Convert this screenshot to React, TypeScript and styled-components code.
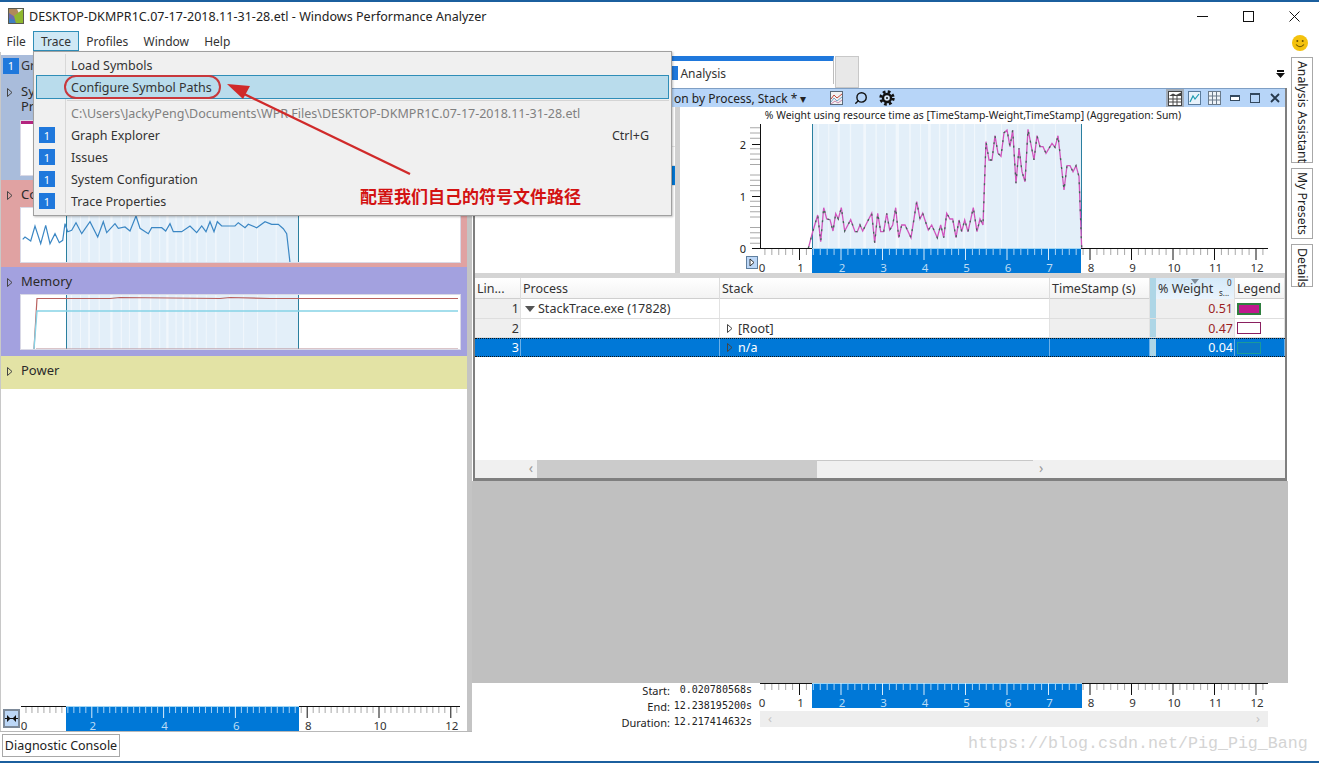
import React from 'react';
import styled, { createGlobalStyle } from 'styled-components';
import { Search } from 'lucide-react';

const UI_FONT = '"Noto Sans", "Open Sans", sans-serif';

const Global = createGlobalStyle`
  html, body { margin: 0; padding: 0; background: #fff; overflow: hidden; }
  * { box-sizing: border-box; }
`;

const Page = styled.div`
  position: relative;
  width: 1319px;
  height: 763px;
  display: flex;
  flex-direction: column;
  border-top: 2px solid #1b5f9e;
  border-bottom: 2px solid #1b5f9e;
  background: #fff;
  font-family: ${UI_FONT};
  font-size: 12.5px;
  color: #333;
  overflow: hidden;
`;

const BlockSvg = styled.svg`
  display: block;
  flex: none;
  overflow: visible;
`;

const TitleBar = styled.div`
  height: 28px;
  flex: none;
  display: flex;
  align-items: center;
  padding: 0 2px 0 8px;
  color: #222;
`;

const TitleText = styled.span`
  margin-left: 5px;
  flex: 1;
  letter-spacing: 0.03px;
`;

const WinButton = styled.div`
  width: 46px;
  height: 28px;
  display: flex;
  align-items: center;
  justify-content: center;
`;

const MenuBar = styled.div`
  height: 22px;
  flex: none;
  display: flex;
  align-items: center;
  padding-right: 11px;
`;

const MenuButton = styled.div<{ $open?: boolean }>`
  height: 20px;
  line-height: 20px;
  padding: 0 6.6px;
  border: 1px solid ${p => (p.$open ? '#2f8eb8' : 'transparent')};
  background: ${p => (p.$open ? '#cfe8f5' : 'transparent')};
  font-size: 12px;
  &:first-child { margin-left: -1px; }
`;

const Spacer = styled.div`
  flex: 1;
`;

const SmileSlot = styled.div`
  height: 16px;
  margin-top: 3px;
`;

const Body = styled.div`
  flex: 1;
  display: flex;
  min-height: 0;
`;

const LeftColumn = styled.div`
  width: 472px;
  flex: none;
  display: flex;
  flex-direction: column;
`;

const LeftPanes = styled.div`
  height: 680px;
  flex: none;
  display: flex;
  border-bottom: 1px solid #b8b8b8;
`;

const SectionList = styled.div`
  width: 467px;
  flex: none;
  display: flex;
  flex-direction: column;
  padding-top: 3px;
  border-left: 1px solid #c8c8c8;
`;

const Splitter = styled.div`
  width: 5px;
  flex: none;
  margin-top: 3px;
  background: #c4c4c4;
`;

const GroupHeader = styled.div`
  height: 23px;
  flex: none;
  display: flex;
  align-items: center;
  gap: 2px;
  padding: 0 0 2px 2px;
  background: #a9bcdb;
  font-size: 12.5px;
`;

const Tag = styled.span`
  width: 16px;
  height: 16px;
  flex: none;
  display: flex;
  align-items: center;
  justify-content: center;
  background: #1f78dc;
  color: #fff;
  font-size: 11px;
`;

const Section = styled.section<{ $bg: string; $h: number }>`
  height: ${p => p.$h}px;
  flex: none;
  background: ${p => p.$bg};
  display: flex;
  flex-direction: column;
  padding-right: 6px;
`;

const SectionHead = styled.div`
  display: flex;
  align-items: flex-start;
  gap: 8px;
  padding: 6px 0 0 6px;
  font-size: 13px;
  line-height: 16px;
  color: #2a2a2a;
  height: 27px;
  flex: none;
`;

const SectionHeadTall = styled(SectionHead)`
  height: 42px;
  line-height: 15px;
`;

const CaretSlot = styled.div`
  margin-top: 1px;
`;

const GraphBox = styled.div`
  margin-left: 19px;
  height: 56px;
  width: 441px;
  flex: none;
  background: #fff;
  border: 1px solid #d9d9e6;
  overflow: hidden;
`;

const ActivityStrip = styled.div`
  height: 3px;
  background: #b4247e;
`;

const LeftFill = styled.div`
  flex: 1;
  background: #fff;
`;

const LeftRulerRow = styled.div`
  height: 25px;
  flex: none;
  display: flex;
  align-items: flex-start;
`;

const ExpandButton = styled.div`
  width: 17px;
  height: 19px;
  margin: 3px 0 0 2px;
  flex: none;
  display: flex;
  align-items: center;
  justify-content: center;
  background: #bcd7f7;
  border: 2px solid #7d8a99;
`;

const FooterRow = styled.div`
  flex: 1;
  padding: 2px 0 0 2px;
  display: flex;
  align-items: flex-start;
`;

const ConsoleButton = styled.div`
  height: 23px;
  width: 118px;
  border: 1px solid #a8a8a8;
  line-height: 21px;
  text-align: center;
  color: #222;
  white-space: nowrap;
`;

const RightColumn = styled.div`
  width: 816px;
  flex: none;
  display: flex;
  flex-direction: column;
`;

const TabStrip = styled.div`
  height: 36px;
  flex: none;
  display: flex;
  align-items: flex-start;
  padding: 4px 0 0 0;
`;

const ActiveTab = styled.div`
  width: 362px;
  height: 28px;
  flex: none;
  border-top: 5px solid #1f78dc;
  border-right: 1px solid #bdbdbd;
  display: flex;
  align-items: center;
  justify-content: flex-end;
  padding: 1px 107px 0 0;
  gap: 2px;
  font-size: 12px;
`;

const TabMark = styled.span`
  width: 6px;
  height: 14px;
  background: #1f78dc;
`;

const IdleTab = styled.div`
  width: 24px;
  height: 32px;
  margin-left: 1px;
  flex: none;
  background: #e8e8e8;
  border: 1px solid #c8c8c8;
`;

const OverflowMark = styled.div`
  margin: 10px 0 0 auto;
  padding-right: 3px;
`;

const GraphWindow = styled.div`
  height: 393px;
  flex: none;
  margin: 0 1px;
  display: flex;
  flex-direction: column;
  border-left: 2px solid #7f7f7f;
  border-right: 2px solid #7f7f7f;
  border-bottom: 3px solid #7f7f7f;
  background: #fff;
`;

const GraphTitle = styled.div`
  height: 19px;
  flex: none;
  display: flex;
  align-items: center;
  background: #b7d5f8;
  border-top: 1px solid #7f9fc4;
  padding: 0 1px 0 199px;
  color: #222;
  font-size: 12px;
`;

const GraphName = styled.span`
  width: 155px;
  white-space: nowrap;
`;

const GraphIcon = styled.div<{ $w: number; $active?: boolean; $flip?: boolean }>`
  width: ${p => p.$w}px;
  height: 18px;
  flex: none;
  display: flex;
  align-items: center;
  justify-content: center;
  color: #111;
  background: ${p => (p.$active ? '#a3adb9' : 'transparent')};
  transform: ${p => (p.$flip ? 'scaleX(-1)' : 'none')};
`;

const ChartArea = styled.div`
  height: 166px;
  flex: none;
  display: flex;
`;

const SeriesList = styled.div`
  width: 200px;
  flex: none;
  display: flex;
  flex-direction: column;
  padding-top: 20px;
`;

const SeriesRow = styled.div<{ $selected?: boolean }>`
  height: 19.5px;
  flex: none;
  border-bottom: 1px solid #e6e6e6;
  background: ${p => (p.$selected ? '#0078d7' : '#fff')};
`;

const ChartSplit = styled.div`
  width: 5px;
  flex: none;
  background: #d0d0d0;
`;

const HSplit = styled.div`
  height: 5px;
  flex: none;
  background: #d4d4d4;
`;

const COLUMNS = '46px 199px 330px 100px 6px 79px 50px';

const HeaderRow = styled.div`
  height: 21px;
  flex: none;
  display: grid;
  grid-template-columns: ${COLUMNS};
  background: linear-gradient(#fff, #f3f3f3);
  border-bottom: 1px solid #cfcfcf;
  color: #333;
`;

const HeadCell = styled.div<{ $sorted?: boolean }>`
  position: relative;
  padding-left: 2px;
  line-height: 21px;
  white-space: nowrap;
  border-right: 1px solid #dcdcdc;
  background: ${p => (p.$sorted ? 'linear-gradient(#d4e9f9, #eaf4fc)' : 'transparent')};
`;

const SortArrow = styled.span`
  position: absolute;
  top: 1px;
  left: 35px;
  border-left: 4px solid transparent;
  border-right: 4px solid transparent;
  border-top: 5px solid #7d8c99;
`;

const TinyMark = styled.span<{ $top: number; $left: number }>`
  position: absolute;
  top: ${p => p.$top}px;
  left: ${p => p.$left}px;
  font-size: 8px;
  line-height: 9px;
`;

const BarCell = styled.div`
  background: #aed6e6;
`;

const Row = styled.div<{ $selected?: boolean; $h: number }>`
  height: ${p => p.$h}px;
  flex: none;
  display: grid;
  grid-template-columns: ${COLUMNS};
  color: ${p => (p.$selected ? '#fff' : '#333')};
  background: ${p => (p.$selected ? '#0078d7' : '#fff')};
  border-bottom: ${p => (p.$selected ? '1px dotted #111' : '1px solid #dedede')};
  border-top: ${p => (p.$selected ? '1px dotted #111' : 'none')};
`;

const Cell = styled.div<{ $shade?: boolean; $right?: boolean; $red?: boolean; $selected?: boolean; $indent?: number }>`
  display: flex;
  align-items: center;
  gap: 3px;
  justify-content: ${p => (p.$right ? 'flex-end' : 'flex-start')};
  padding-right: ${p => (p.$right ? '1px' : '0')};
  padding-left: ${p => p.$indent ?? 0}px;
  background: ${p => (p.$selected ? 'transparent' : p.$shade ? '#efefef' : 'transparent')};
  color: ${p => (p.$red ? '#9c1f1f' : 'inherit')};
  border-right: 1px solid ${p => (p.$selected ? '#6cb0e8' : '#e2e2e2')};
  white-space: nowrap;
`;

const StackName = styled.span`
  margin-left: 2px;
`;

const Swatch = styled.span<{ $fill: string; $edge: string; $thick?: boolean }>`
  width: 24px;
  height: 12px;
  margin-left: 2px;
  background: ${p => p.$fill};
  border: ${p => (p.$thick ? 2 : 1)}px solid ${p => p.$edge};
`;

const TableSpace = styled.div`
  flex: 1;
  background: #fff;
`;

const HScroll = styled.div`
  height: 18px;
  flex: none;
  display: flex;
  align-items: stretch;
  background: #f0f0f0;
  color: #9a9a9a;
`;

const ScrollGutter = styled.div`
  width: 62px;
  flex: none;
  text-align: right;
  padding-right: 4px;
  line-height: 16px;
  font-size: 14px;
`;

const ScrollThumb = styled.div`
  width: 280px;
  flex: none;
  background: #cbcbcb;
`;

const ScrollTrack = styled.div`
  width: 216px;
  flex: none;
  border-top: 1px solid #c8c8c8;
`;

const ScrollEnd = styled.div`
  padding-left: 6px;
  line-height: 16px;
  font-size: 14px;
`;

const GrayArea = styled.div`
  flex: 1;
  background: #c0c0c0;
`;

const TimeFooter = styled.div`
  height: 78px;
  flex: none;
  display: flex;
`;

const TimeTable = styled.div`
  width: 288px;
  flex: none;
  display: grid;
  grid-template-columns: 198px 90px;
  grid-auto-rows: 16px;
`;

const TimeLabel = styled.div`
  text-align: right;
  font-size: 11px;
  line-height: 16px;
  color: #222;
`;

const TimeValue = styled.div`
  padding-right: 8px;
  text-align: right;
  font-family: "DejaVu Sans Mono", "Liberation Mono", monospace;
  font-size: 10px;
  line-height: 14px;
  color: #222;
`;

const TimeRuler = styled.div`
  display: flex;
  flex-direction: column;
  gap: 3px;
`;

const TimeScroll = styled.div`
  width: 508px;
  height: 16px;
  background: #eeeeee;
  display: flex;
  justify-content: space-between;
  padding: 0 8px;
  font-size: 13px;
  line-height: 15px;
  color: #c4c4c4;
`;

const Rail = styled.div`
  width: 31px;
  flex: none;
  display: flex;
  flex-direction: column;
  gap: 5px;
  padding: 5px 0 0 3px;
`;

const RailTab = styled.div<{ $h: number }>`
  width: 22px;
  height: ${p => p.$h}px;
  border: 1px solid #a8a8a8;
  writing-mode: vertical-rl;
  display: flex;
  align-items: center;
  padding-top: 3px;
  color: #222;
  font-size: 12.3px;
  white-space: nowrap;
`;

const TraceMenu = styled.div`
  position: absolute;
  left: 33px;
  top: 49px;
  width: 639px;
  height: 165px;
  padding-top: 2px;
  background: #f0f0f0;
  border: 1px solid #a0a0a0;
  box-shadow: 1px 1px 2px rgba(0, 0, 0, 0.25);
  z-index: 5;
  &::before {
    content: '';
    position: absolute;
    left: 31px;
    top: 2px;
    bottom: 2px;
    width: 1px;
    background: #d8d8d8;
  }
`;

const MenuItem = styled.div<{ $hot?: boolean; $dim?: boolean }>`
  position: relative;
  height: 22px;
  display: flex;
  align-items: center;
  margin: 0 3px;
  padding: 0 19px 0 2px;
  background: ${p => (p.$hot ? '#b9dcec' : 'transparent')};
  outline: ${p => (p.$hot ? '1px solid #2f8eb8' : 'none')};
  color: ${p => (p.$dim ? '#808080' : '#333')};
`;

const MenuGutter = styled.div`
  width: 32px;
  flex: none;
`;

const MenuLabel = styled.span`
  flex: 1;
`;

const MenuSeparator = styled.div`
  height: 1px;
  margin: 2px 2px 1px 33px;
  background: #d4d4d4;
`;

const Overlay = styled.svg`
  position: absolute;
  left: 0;
  top: -2px;
  z-index: 6;
  pointer-events: none;
`;

const Note = styled.div`
  position: absolute;
  left: 360px;
  top: 183px;
  z-index: 7;
  font-family: "Noto Sans CJK SC", sans-serif;
  font-weight: 700;
  font-size: 17px;
  line-height: 22px;
  color: #d31212;
  white-space: nowrap;
`;

const Watermark = styled.div`
  position: absolute;
  left: 968px;
  top: 732px;
  z-index: 4;
  font-family: "Liberation Mono", monospace;
  font-size: 16.67px;
  line-height: 20px;
  color: #d4d4d4;
  white-space: nowrap;
`;

const STRIPES: [number, number][] = [
  [0.02, 0.006], [0.06, 0.004], [0.095, 0.008], [0.14, 0.005], [0.19, 0.01], [0.235, 0.005],
  [0.27, 0.004], [0.31, 0.012], [0.36, 0.006], [0.4, 0.004], [0.43, 0.01], [0.47, 0.005],
  [0.5, 0.007], [0.53, 0.004], [0.56, 0.006], [0.6, 0.004], [0.64, 0.006], [0.7, 0.003],
  [0.76, 0.004], [0.82, 0.004], [0.9, 0.003],
];

function Caretside() {
  return (
    <svg width="6" height="9" viewBox="0 0 6 9">
      <path d="M0.5 0.5 L5 4.5 L0.5 8.5 Z" fill="none" stroke="#444" strokeWidth="1" />
    </svg>
  );
}

function CaretDown() {
  return (
    <svg width="10" height="6" viewBox="0 0 10 6">
      <path d="M0 0 H10 L5 6 Z" fill="#555" />
    </svg>
  );
}

interface RulerProps {
  width: number;
  height: number;
  origin: number;
  unit: number;
  every: number;
  minor: number;
  max: number;
  selStart: number;
  selEnd: number;
  startAt: number;
}

function Ruler(props: RulerProps) {
  const { width, height, origin, unit, every, minor, max, selStart, selEnd, startAt } = props;
  const inSel = (x: number) => x >= selStart && x <= selEnd;
  const minors: React.ReactNode[] = [];
  const step = (unit * every) / minor;
  for (let i = 1; i * step + origin < width; i++) {
    const x = origin + i * step;
    if (i % minor === 0) continue;
    minors.push(
      <line key={i} x1={x} x2={x} y1={1} y2={7} stroke={inSel(x) ? '#a9d2f3' : '#a8a8a8'} />,
    );
  }
  const labels: React.ReactNode[] = [];
  for (let t = 0; t <= max; t += every) {
    const x = origin + t * unit;
    labels.push(
      <g key={t}>
        {t > 0 && <line x1={x} x2={x} y1={0} y2={12} stroke={inSel(x) ? '#d8ecfb' : '#111'} />}
        <text
          x={t === 0 ? x + 4 : x + 1}
          y={height - 1}
          textAnchor="middle"
          fontSize="11.5"
          fontFamily={UI_FONT}
          fill={inSel(x) ? '#bcdcf5' : '#333'}
        >
          {t}
        </text>
      </g>,
    );
  }
  return (
    <BlockSvg width={width} height={height} viewBox={`0 0 ${width} ${height}`}>
      <line x1={startAt} x2={width} y1={0.5} y2={0.5} stroke="#111" />
      <rect x={selStart} y={0} width={selEnd - selStart} height={height} fill="#0078d7" />
      <line x1={selStart} x2={selEnd} y1={0.5} y2={0.5} stroke="#9fd6f5" />
      {minors}
      {labels}
    </BlockSvg>
  );
}

const toPath = (pts: number[][], sx: number, ox: number, sy: number, oy: number) =>
  pts.map(([x, y]) => `${(x * sx + ox).toFixed(1)},${(y * sy + oy).toFixed(1)}`).join(' ');

const WEIGHT_POINTS = [
  [205,490],[217,445],[233,390],[242,470],[251,368],[260,402],[270,404],[279,438],[287,386],[295,402],[304,368],
  [314,438],[332,404],[345,440],[352,440],[360,420],[368,438],[395,385],[404,474],[413,385],[422,440],[431,440],
  [440,385],[449,435],[458,420],[467,368],[476,458],[485,420],[495,420],[513,458],[530,350],[540,402],[548,385],
  [565,435],[575,420],[592,458],[602,420],[611,458],[620,385],[630,402],[638,402],[648,458],[657,405],[665,440],
  [674,405],[684,440],[700,368],[711,440],[720,402],[729,420],[738,170],[747,225],[756,225],[765,152],[774,205],
  [783,214],[792,143],[801,135],[810,185],[818,135],[828,295],[837,190],[846,260],[855,290],[864,133],[882,225],
  [891,152],[900,185],[909,185],[918,205],[936,175],[945,187],[954,152],[972,315],[981,242],[990,242],[999,260],
  [1008,242],[1017,275],[1025,490],
];

const CPU_POINTS = [
  [68,175],[75,168],[92,180],[105,135],[122,188],[137,133],[150,188],[165,158],[178,185],[188,178],[195,128],
  [203,152],[215,148],[228,125],[245,158],[270,122],[293,168],[310,122],[320,155],[345,128],[355,142],[375,138],
  [390,150],[408,105],[420,142],[445,158],[455,140],[485,140],[497,150],[510,128],[520,152],[545,152],[570,135],
  [590,155],[605,135],[618,152],[630,122],[642,152],[652,122],[665,135],[705,135],[715,125],[735,140],[745,130],
  [770,140],[795,122],[815,130],[835,130],[850,143],[860,158],[870,245],
];

function SelectionBand({ x, w, y, h }: { x: number; w: number; y: number; h: number }) {
  return (
    <g>
      <rect x={x} y={y} width={w} height={h} fill="#e3eff9" />
      {STRIPES.map(([a, b]) => (
        <rect key={a} x={x + a * w} y={y} width={Math.max(1, b * w)} height={h} fill="#f1f7fc" />
      ))}
      <line x1={x + 0.5} x2={x + 0.5} y1={y} y2={y + h} stroke="#2a7f9f" />
      <line x1={x + w - 0.5} x2={x + w - 0.5} y1={y} y2={y + h} stroke="#2a7f9f" />
    </g>
  );
}

function CpuGraph() {
  return (
    <BlockSvg width="439" height="54" viewBox="21 207 439 54">
      <SelectionBand x={66} w={233} y={207} h={54} />
      <polyline points={toPath(CPU_POINTS, 1 / 3, 0, 1 / 3, 180)} fill="none" stroke="#3b87c4" strokeWidth="1.2" />
    </BlockSvg>
  );
}

function MemoryGraph() {
  return (
    <BlockSvg width="439" height="54" viewBox="21 295 439 54">
      <SelectionBand x={66} w={233} y={295} h={54} />
      <polyline points="34,349 37,298.5 110,298.5 120,297.5 220,298.5 230,297.5 270,298.5 458,298.5" fill="none" stroke="#b9615f" strokeWidth="1.2" />
      <polyline points="34,349 37,311 458,311" fill="none" stroke="#86d3e6" strokeWidth="1.4" />
      <line x1="36" x2="458" y1="349" y2="349" stroke="#b58a92" strokeWidth="1" />
    </BlockSvg>
  );
}

function WeightChart() {
  const yTicks: React.ReactNode[] = [];
  for (let i = 0; i <= 23; i++) {
    if (i % 5 === 0) continue;
    const y = 248.5 - i * 5.25;
    yTicks.push(<line key={i} x1={750} x2={760} y1={y} y2={y} stroke="#a8a8a8" />);
  }
  return (
    <BlockSvg width="605" height="166" viewBox="680 107 605 166">
      <text x="973" y="119" textAnchor="middle" fontSize="10.4" fontFamily={UI_FONT} fill="#222">
        % Weight using resource time as [TimeStamp-Weight,TimeStamp] (Aggregation: Sum)
      </text>
      <SelectionBand x={812} w={270} y={124} h={125} />
      <line x1="760.5" x2="760.5" y1="124" y2="249" stroke="#111" />
      {yTicks}
      {[[248.5, '0'], [196.5, '1'], [144.5, '2']].map(([y, t]) => (
        <g key={t as string}>
          <line x1={752} x2={760} y1={y as number} y2={y as number} stroke="#111" />
          <text x={743} y={(y as number) + 4} textAnchor="middle" fontSize="11" fontFamily={UI_FONT} fill="#222">
            {t}
          </text>
        </g>
      ))}
      <polyline points={toPath(WEIGHT_POINTS, 1 / 3, 740, 1 / 3, 85)} fill="none" stroke="#cf55bd" strokeWidth="1.3" />
      <polyline
        points={toPath(WEIGHT_POINTS, 1 / 3, 740, 1 / 3, 85)}
        fill="none"
        stroke="#3d6b55"
        strokeWidth="1.3"
        strokeDasharray="2 7"
      />
      <g transform="translate(760 248)">
        <Ruler width={508} height={25} origin={-2} unit={41.5} every={1} minor={6} max={12} selStart={52} selEnd={321} startAt={0} />
      </g>
      <rect x="746.5" y="256.5" width="11" height="12" fill="#bcd7f7" stroke="#5f7f9f" />
      <path d="M750 259 L754 262.5 L750 266 Z" fill="#fff" stroke="#333" />
    </BlockSvg>
  );
}

function AppIcon() {
  return (
    <svg width="16" height="16" viewBox="0 0 16 16">
      <rect width="16" height="16" fill="#f4f4f0" />
      <path d="M1 1 L9 1 L12 8 L8 15 L1 15 Z" fill="#b08a5a" />
      <path d="M1 5 L7 9 L8 15 L1 15 Z" fill="#6a6ab0" />
      <path d="M1 10 L6 12 L8 15 L1 15 Z" fill="#3f7fc0" />
      <path d="M6 8 L15 1 L15 15 L8 15 Z" fill="#8fb82e" />
      <rect x="0.5" y="0.5" width="15" height="15" fill="none" stroke="#5a5a50" />
    </svg>
  );
}

function Smile() {
  return (
    <BlockSvg width="16" height="16" viewBox="0 0 16 16">
      <circle cx="8" cy="8" r="8" fill="#f4c20d" />
      <circle cx="5.3" cy="6" r="1" fill="#6b5200" />
      <circle cx="10.7" cy="6" r="1" fill="#6b5200" />
      <path d="M4 9.5 Q8 14 12 9.5" fill="none" stroke="#6b5200" strokeWidth="1.1" />
    </BlockSvg>
  );
}

function MiniChartIcon() {
  return (
    <svg width="13" height="14" viewBox="0 0 13 14">
      <rect x="0.5" y="0.5" width="12" height="13" fill="#f2f2f2" stroke="#5a6a7a" />
      <path d="M1 8 L4 4 L7 7 L12 3" fill="none" stroke="#c24a3a" />
      <path d="M1 11 L4 7 L7 10 L12 6" fill="none" stroke="#7aa6c8" />
      <path d="M1 13 L5 10 L8 12 L12 9" fill="none" stroke="#c88ab0" />
    </svg>
  );
}

function GearIcon() {
  return (
    <svg width="16" height="16" viewBox="0 0 16 16">
      <circle cx="8" cy="8" r="6.2" fill="none" stroke="#111" strokeWidth="3" strokeDasharray="2.6 2.27" />
      <circle cx="8" cy="8" r="5.2" fill="#111" />
      <circle cx="8" cy="8" r="2.8" fill="#d8e6f5" />
      <circle cx="8" cy="8" r="1" fill="#111" />
    </svg>
  );
}

function TableChartIcon() {
  return (
    <svg width="14" height="15" viewBox="0 0 14 15">
      <rect x="0.5" y="0.5" width="13" height="14" fill="#fff" stroke="#444" />
      <path d="M1 5 L5 2.5 L8 4 L13 1.5 V5 H1Z" fill="#444" />
      <path d="M1 8 H13 M1 11 H13 M5 5 V15 M9 5 V15" stroke="#444" />
    </svg>
  );
}

function LineIcon() {
  return (
    <svg width="13" height="14" viewBox="0 0 13 14">
      <rect x="0.5" y="0.5" width="12" height="13" fill="#e8f2fb" stroke="#5a7a9a" />
      <path d="M2 11 L5 5 L7 8 L11 3" fill="none" stroke="#1d9ab0" strokeWidth="1.2" />
    </svg>
  );
}

function GridIcon() {
  return (
    <svg width="13" height="14" viewBox="0 0 13 14">
      <rect x="0.5" y="0.5" width="12" height="13" fill="#eef3f8" stroke="#6a7a8a" />
      <path d="M1 5 H12 M1 9 H12 M4.5 1 V13 M8.5 1 V13" stroke="#6a7a8a" />
    </svg>
  );
}

const MENU = ['Graph Explorer', 'Issues', 'System Configuration', 'Trace Properties'];

export default function App() {
  return (
    <>
      <Global />
      <Page>
        <TitleBar>
          <AppIcon />
          <TitleText>DESKTOP-DKMPR1C.07-17-2018.11-31-28.etl - Windows Performance Analyzer</TitleText>
          <WinButton>
            <svg width="11" height="11" viewBox="0 0 11 11"><line x1="0" x2="11" y1="5.5" y2="5.5" stroke="#111" /></svg>
          </WinButton>
          <WinButton>
            <svg width="11" height="11" viewBox="0 0 11 11"><rect x="0.5" y="0.5" width="10" height="10" fill="none" stroke="#111" /></svg>
          </WinButton>
          <WinButton>
            <svg width="11" height="11" viewBox="0 0 11 11"><path d="M0.5 0.5 L10.5 10.5 M10.5 0.5 L0.5 10.5" stroke="#111" /></svg>
          </WinButton>
        </TitleBar>
        <MenuBar>
          <MenuButton>File</MenuButton>
          <MenuButton $open>Trace</MenuButton>
          <MenuButton>Profiles</MenuButton>
          <MenuButton>Window</MenuButton>
          <MenuButton>Help</MenuButton>
          <Spacer />
          <SmileSlot><Smile /></SmileSlot>
        </MenuBar>
        <Body>
          <LeftColumn>
            <LeftPanes>
              <SectionList>
                <GroupHeader>
                  <Tag>1</Tag>
                  <span>Graph Explorer</span>
                </GroupHeader>
                <Section $bg="#a9bcdb" $h={102}>
                  <SectionHeadTall>
                    <CaretSlot><Caretside /></CaretSlot>
                    <span>System Activity<br />Processes</span>
                  </SectionHeadTall>
                  <GraphBox><ActivityStrip /></GraphBox>
                </Section>
                <Section $bg="#e0a2a2" $h={87}>
                  <SectionHead>
                    <CaretSlot><Caretside /></CaretSlot>
                    <span>Computation</span>
                  </SectionHead>
                  <GraphBox><CpuGraph /></GraphBox>
                </Section>
                <Section $bg="#a3a1df" $h={89}>
                  <SectionHead>
                    <CaretSlot><Caretside /></CaretSlot>
                    <span>Memory</span>
                  </SectionHead>
                  <GraphBox><MemoryGraph /></GraphBox>
                </Section>
                <Section $bg="#e3e3a5" $h={33}>
                  <SectionHead>
                    <CaretSlot><Caretside /></CaretSlot>
                    <span>Power</span>
                  </SectionHead>
                </Section>
                <LeftFill />
                <LeftRulerRow>
                  <ExpandButton>
                    <svg width="13" height="7" viewBox="0 0 13 7">
                      <path d="M0 3.5 H13" stroke="#111" />
                      <path d="M2 0 L5.5 3.5 L2 7 Z M11 0 L7.5 3.5 L11 7 Z" fill="#111" />
                    </svg>
                  </ExpandButton>
                  <Ruler width={440} height={25} origin={0} unit={35.9} every={2} minor={12} max={12} selStart={46} selEnd={279} startAt={1} />
                </LeftRulerRow>
              </SectionList>
              <Splitter />
            </LeftPanes>
            <FooterRow>
              <ConsoleButton>Diagnostic Console</ConsoleButton>
            </FooterRow>
          </LeftColumn>
          <RightColumn>
            <TabStrip>
              <ActiveTab>
                <TabMark />
                <span>Analysis</span>
              </ActiveTab>
              <IdleTab />
              <OverflowMark>
                <svg width="9" height="9" viewBox="0 0 9 9">
                  <path d="M1 0 H8 V2 H1 Z M0 3 H9 L4.5 8 Z" fill="#111" />
                </svg>
              </OverflowMark>
            </TabStrip>
            <GraphWindow>
              <GraphTitle>
                <GraphName>on by Process, Stack * ▾</GraphName>
                <GraphIcon $w={14}><MiniChartIcon /></GraphIcon>
                <GraphIcon $w={36} $flip><Search size={14} strokeWidth={2.4} /></GraphIcon>
                <GraphIcon $w={16}><GearIcon /></GraphIcon>
                <Spacer />
                <GraphIcon $w={18} $active><TableChartIcon /></GraphIcon>
                <GraphIcon $w={20}><LineIcon /></GraphIcon>
                <GraphIcon $w={20}><GridIcon /></GraphIcon>
                <GraphIcon $w={21}>
                  <svg width="10" height="7" viewBox="0 0 10 7"><rect x="0.5" y="0.5" width="9" height="5" fill="#fff" stroke="#34495e" /><rect width="10" height="2" fill="#34495e" /></svg>
                </GraphIcon>
                <GraphIcon $w={20}>
                  <svg width="10" height="10" viewBox="0 0 10 10"><rect x="0.5" y="0.5" width="9" height="9" fill="none" stroke="#34495e" /><rect width="10" height="2" fill="#34495e" /></svg>
                </GraphIcon>
                <GraphIcon $w={19}>
                  <svg width="10" height="10" viewBox="0 0 10 10"><path d="M1 1 L9 9 M9 1 L1 9" stroke="#26394d" strokeWidth="1.8" /></svg>
                </GraphIcon>
              </GraphTitle>
              <ChartArea>
                <SeriesList>
                  <SeriesRow />
                  <SeriesRow />
                  <SeriesRow $selected />
                </SeriesList>
                <ChartSplit />
                <WeightChart />
              </ChartArea>
              <HSplit />
              <HeaderRow>
                <HeadCell>Lin...</HeadCell>
                <HeadCell>Process</HeadCell>
                <HeadCell>Stack</HeadCell>
                <HeadCell>TimeStamp (s)</HeadCell>
                <BarCell />
                <HeadCell $sorted>
                  <SortArrow />
                  % Weight
                  <TinyMark $top={0} $left={71}>0</TinyMark>
                  <TinyMark $top={10} $left={63}>s...</TinyMark>
                </HeadCell>
                <HeadCell>Legend</HeadCell>
              </HeaderRow>
              <Row $h={20}>
                <Cell $shade $right>1</Cell>
                <Cell $indent={4}><CaretDown />StackTrace.exe (17828)</Cell>
                <Cell />
                <Cell $shade />
                <BarCell />
                <Cell $shade $right $red>0.51</Cell>
                <Cell><Swatch $fill="#c0188c" $edge="#2f7f3f" $thick /></Cell>
              </Row>
              <Row $h={19}>
                <Cell $shade $right>2</Cell>
                <Cell />
                <Cell $indent={7}><Caretside /><StackName>[Root]</StackName></Cell>
                <Cell $shade />
                <BarCell />
                <Cell $shade $right $red>0.47</Cell>
                <Cell><Swatch $fill="#fff" $edge="#8a2060" /></Cell>
              </Row>
              <Row $h={19} $selected>
                <Cell $selected $right>3</Cell>
                <Cell $selected />
                <Cell $selected $indent={7}><Caretside /><StackName>n/a</StackName></Cell>
                <Cell $selected />
                <BarCell />
                <Cell $selected $right>0.04</Cell>
                <Cell $selected><Swatch $fill="#0b78c8" $edge="#1a9a9a" /></Cell>
              </Row>
              <TableSpace />
              <HScroll>
                <ScrollGutter>‹</ScrollGutter>
                <ScrollThumb />
                <ScrollTrack />
                <ScrollEnd>›</ScrollEnd>
              </HScroll>
            </GraphWindow>
            <GrayArea />
            <TimeFooter>
              <TimeTable>
                <TimeLabel>Start:</TimeLabel>
                <TimeValue>0.020780568s</TimeValue>
                <TimeLabel>End:</TimeLabel>
                <TimeValue>12.238195200s</TimeValue>
                <TimeLabel>Duration:</TimeLabel>
                <TimeValue>12.217414632s</TimeValue>
              </TimeTable>
              <TimeRuler>
                <Ruler width={508} height={25} origin={-2} unit={41.5} every={1} minor={6} max={12} selStart={52} selEnd={322} startAt={0} />
                <TimeScroll><span>‹</span><span>›</span></TimeScroll>
              </TimeRuler>
            </TimeFooter>
          </RightColumn>
          <Rail>
            <RailTab $h={106}>Analysis Assistant</RailTab>
            <RailTab $h={71}>My Presets</RailTab>
            <RailTab $h={43}>Details</RailTab>
          </Rail>
        </Body>
        <TraceMenu>
          <MenuItem><MenuGutter /><MenuLabel>Load Symbols</MenuLabel></MenuItem>
          <MenuItem $hot><MenuGutter /><MenuLabel>Configure Symbol Paths</MenuLabel></MenuItem>
          <MenuSeparator />
          <MenuItem $dim><MenuGutter /><MenuLabel>C:\Users\JackyPeng\Documents\WPR Files\DESKTOP-DKMPR1C.07-17-2018.11-31-28.etl</MenuLabel></MenuItem>
          {MENU.map(name => (
            <MenuItem key={name}>
              <MenuGutter><Tag>1</Tag></MenuGutter>
              <MenuLabel>{name}</MenuLabel>
              {name === 'Graph Explorer' && <span>Ctrl+G</span>}
            </MenuItem>
          ))}
        </TraceMenu>
        <Overlay width="1319" height="763" viewBox="0 0 1319 763">
          <rect x="65" y="76" width="155" height="22" rx="11" fill="none" stroke="#c8383c" strokeWidth="2" />
          <line x1="410" y1="174" x2="240" y2="92" stroke="#d02a2a" strokeWidth="2.4" />
          <path d="M227 84 L250 86 L243 99 Z" fill="#d02a2a" />
        </Overlay>
        <Note>配置我们自己的符号文件路径</Note>
        <Watermark>https://blog.csdn.net/Pig_Pig_Bang</Watermark>
      </Page>
    </>
  );
}
